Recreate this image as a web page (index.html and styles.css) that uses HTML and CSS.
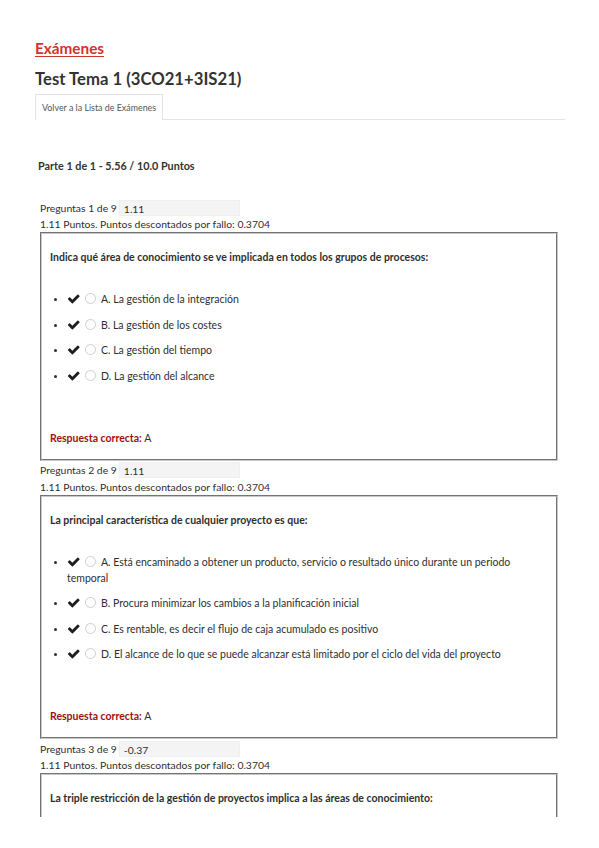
FILE: index.html
```html
<!DOCTYPE html>
<html lang="es">
<head>
<meta charset="utf-8">
<title>Test Tema 1 (3CO21+3IS21)</title>
<link rel="stylesheet" href="styles.css">
</head>
<body>
<div class="page">
  <a class="crumb" href="#">Exámenes</a>
  <h1 class="title">Test Tema 1 (3CO21+3IS21)</h1>
  <div class="tabs"><a class="tab" href="#">Volver a la Lista de Exámenes</a></div>

  <h2 class="part">Parte 1 de 1 - 5.56 / 10.0 Puntos</h2>

  <div class="questions">
    <div class="question">
      <div class="meta"><span>Preguntas 1 de 9</span><span class="score">1.11</span></div>
      <div class="points">1.11 Puntos. Puntos descontados por fallo: 0.3704</div>
      <div class="box">
        <p class="qtext">Indica qué área de conocimiento se ve implicada en todos los grupos de procesos:</p>
        <ul class="options">
          <li><span class="check"><svg viewBox="0 0 1792 1792"><path d="M1671 566q0 40-28 68l-724 724-136 136q-28 28-68 28t-68-28l-136-136-362-362q-28-28-28-68t28-68l136-136q28-28 68-28t68 28l294 295 656-657q28-28 68-28t68 28l136 136q28 28 28 68z"/></svg></span><span class="radio"></span>A. La gestión de la integración</li>
          <li><span class="check"><svg viewBox="0 0 1792 1792"><path d="M1671 566q0 40-28 68l-724 724-136 136q-28 28-68 28t-68-28l-136-136-362-362q-28-28-28-68t28-68l136-136q28-28 68-28t68 28l294 295 656-657q28-28 68-28t68 28l136 136q28 28 28 68z"/></svg></span><span class="radio"></span>B. La gestión de los costes</li>
          <li><span class="check"><svg viewBox="0 0 1792 1792"><path d="M1671 566q0 40-28 68l-724 724-136 136q-28 28-68 28t-68-28l-136-136-362-362q-28-28-28-68t28-68l136-136q28-28 68-28t68 28l294 295 656-657q28-28 68-28t68 28l136 136q28 28 28 68z"/></svg></span><span class="radio"></span>C. La gestión del tiempo</li>
          <li><span class="check"><svg viewBox="0 0 1792 1792"><path d="M1671 566q0 40-28 68l-724 724-136 136q-28 28-68 28t-68-28l-136-136-362-362q-28-28-28-68t28-68l136-136q28-28 68-28t68 28l294 295 656-657q28-28 68-28t68 28l136 136q28 28 28 68z"/></svg></span><span class="radio"></span>D. La gestión del alcance</li>
        </ul>
        <p class="answer"><span class="answer-label">Respuesta correcta:</span> A</p>
      </div>
    </div>

    <div class="question">
      <div class="meta"><span>Preguntas 2 de 9</span><span class="score">1.11</span></div>
      <div class="points">1.11 Puntos. Puntos descontados por fallo: 0.3704</div>
      <div class="box">
        <p class="qtext">La principal característica de cualquier proyecto es que:</p>
        <ul class="options">
          <li><span class="check"><svg viewBox="0 0 1792 1792"><path d="M1671 566q0 40-28 68l-724 724-136 136q-28 28-68 28t-68-28l-136-136-362-362q-28-28-28-68t28-68l136-136q28-28 68-28t68 28l294 295 656-657q28-28 68-28t68 28l136 136q28 28 28 68z"/></svg></span><span class="radio"></span>A. Está encaminado a obtener un producto, servicio o resultado único durante un periodo temporal</li>
          <li><span class="check"><svg viewBox="0 0 1792 1792"><path d="M1671 566q0 40-28 68l-724 724-136 136q-28 28-68 28t-68-28l-136-136-362-362q-28-28-28-68t28-68l136-136q28-28 68-28t68 28l294 295 656-657q28-28 68-28t68 28l136 136q28 28 28 68z"/></svg></span><span class="radio"></span>B. Procura minimizar los cambios a la planificación inicial</li>
          <li><span class="check"><svg viewBox="0 0 1792 1792"><path d="M1671 566q0 40-28 68l-724 724-136 136q-28 28-68 28t-68-28l-136-136-362-362q-28-28-28-68t28-68l136-136q28-28 68-28t68 28l294 295 656-657q28-28 68-28t68 28l136 136q28 28 28 68z"/></svg></span><span class="radio"></span>C. Es rentable, es decir el flujo de caja acumulado es positivo</li>
          <li><span class="check"><svg viewBox="0 0 1792 1792"><path d="M1671 566q0 40-28 68l-724 724-136 136q-28 28-68 28t-68-28l-136-136-362-362q-28-28-28-68t28-68l136-136q28-28 68-28t68 28l294 295 656-657q28-28 68-28t68 28l136 136q28 28 28 68z"/></svg></span><span class="radio"></span>D. El alcance de lo que se puede alcanzar está limitado por el ciclo del vida del proyecto</li>
        </ul>
        <p class="answer"><span class="answer-label">Respuesta correcta:</span> A</p>
      </div>
    </div>

    <div class="question">
      <div class="meta"><span>Preguntas 3 de 9</span><span class="score">-0.37</span></div>
      <div class="points">1.11 Puntos. Puntos descontados por fallo: 0.3704</div>
      <div class="box box-cut">
        <p class="qtext">La triple restricción de la gestión de proyectos implica a las áreas de conocimiento:</p>
      </div>
    </div>
  </div>
</div>
</body>
</html>
```

FILE: styles.css
```css
html, body {
  margin: 0;
  padding: 0;
  background: #ffffff;
}

body {
  font-family: Lato, "Open Sans", "Liberation Sans", sans-serif;
  color: #2f2f2f;
  overflow: hidden;
  height: 848px;
}

.page {
  padding: 38px 34px 0 35px;
}

.crumb {
  display: block;
  width: max-content;
  font-size: 15.3px;
  line-height: 20px;
  font-weight: 700;
  color: #d0322d;
  text-decoration: underline;
  text-underline-offset: 2px;
}

.title {
  margin: 10px 0 0;
  font-size: 16.7px;
  line-height: 22px;
  font-weight: 700;
  color: #333333;
}

.tabs {
  margin-top: 4px;
  display: flex;
  border-bottom: 1px solid #e3e3e3;
}

.tab {
  display: block;
  padding: 0 6px;
  height: 25px;
  line-height: 25px;
  font-size: 8.9px;
  color: #555555;
  text-decoration: none;
  border: 1px solid #e3e3e3;
  border-bottom: none;
  margin-bottom: -1px;
  background: #ffffff;
}

.part {
  margin: 39px 0 0 3px;
  font-size: 10.8px;
  line-height: 14px;
  font-weight: 700;
  color: #333333;
}

.questions {
  margin: 26px 0 0 5px;
  width: 518px;
}

.question {
  margin-bottom: 1px;
}

.meta {
  display: flex;
  align-items: center;
  gap: 2px;
  height: 17px;
  font-size: 10.4px;
}

.score {
  display: block;
  width: 121px;
  height: 16px;
  line-height: 16px;
  padding-left: 4px;
  background: #f4f4f4;
  border: 1px solid #efefef;
  box-sizing: border-box;
}

.points {
  font-size: 10.4px;
  line-height: 16px;
}

.box {
  border: 2px groove #c8c8c8;
  padding: 15px 8px 13px 8px;
}

.box-cut {
  border-bottom: none;
  padding-bottom: 11px;
}

.qtext {
  margin: 0;
  font-size: 10.5px;
  line-height: 16px;
  font-weight: 700;
}

.options {
  list-style: disc;
  margin: 26px 0 0;
  padding: 0 0 0 17px;
}

.options li {
  font-size: 10.5px;
  line-height: 16px;
  margin-bottom: 9.5px;
}

.options li::marker {
  font-size: 9px;
}

.check {
  display: inline-block;
  width: 14px;
  height: 13px;
  vertical-align: -2px;
}

.check svg {
  display: block;
  width: 13.5px;
  height: 13.5px;
  fill: #1e1e1e;
}

.radio {
  display: inline-block;
  box-sizing: border-box;
  width: 11px;
  height: 11px;
  border: 1px solid #cfcfcf;
  border-radius: 50%;
  margin: 0 5px 0 4px;
  vertical-align: -1px;
  background: #ffffff;
}

.answer {
  margin: 46px 0 0;
  font-size: 10.5px;
  line-height: 16px;
}

.answer-label {
  color: #a01010;
  font-weight: 700;
}
```
